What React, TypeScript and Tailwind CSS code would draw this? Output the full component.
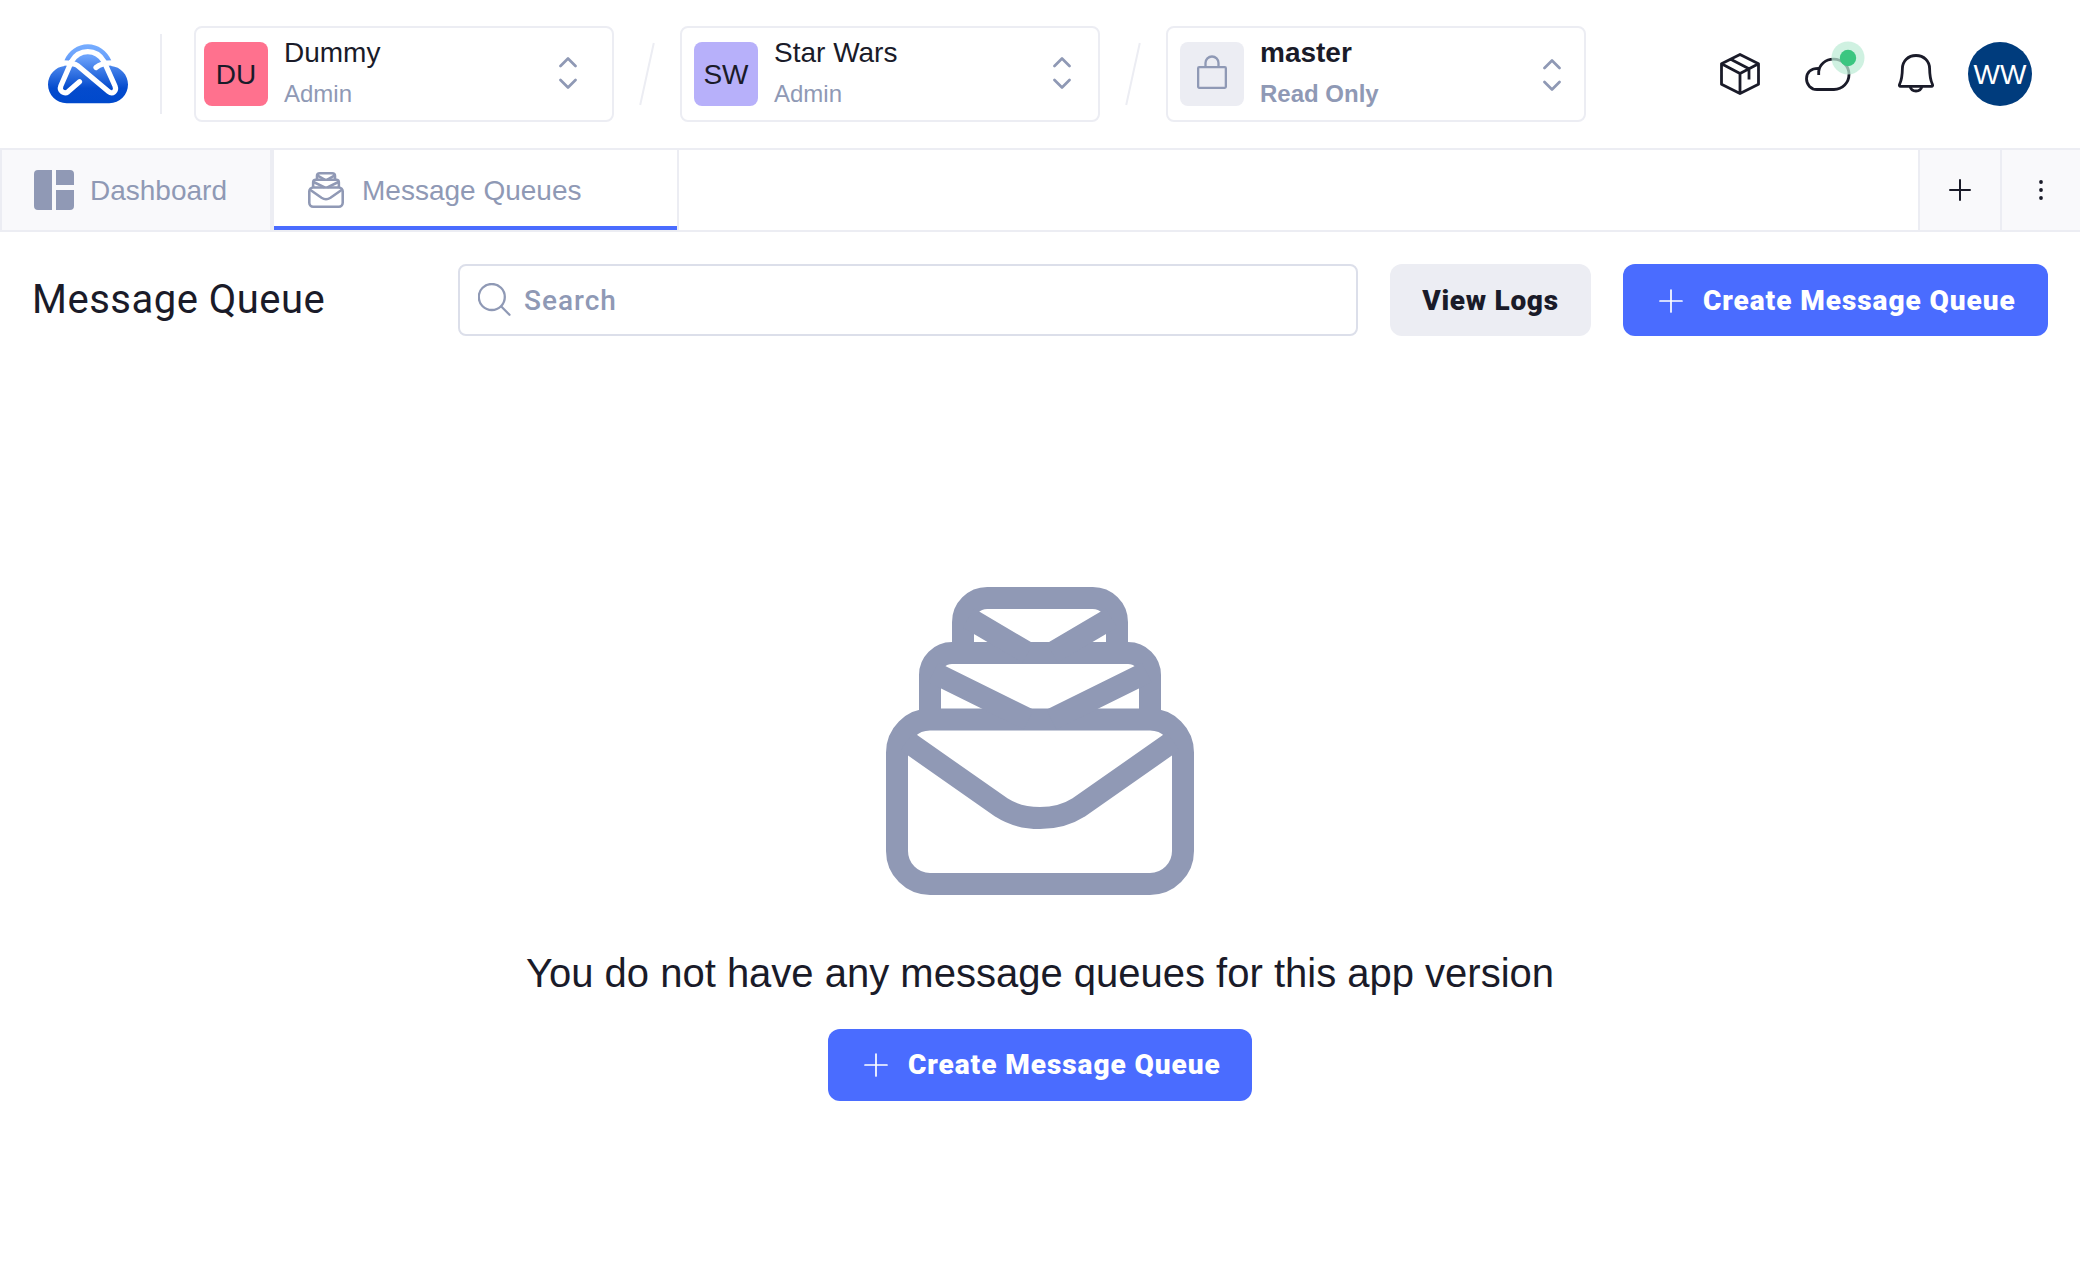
import type { ReactNode } from "react";

function Logo() {
  return (
    <svg className="h-[60px] w-20 shrink-0" viewBox="0 0 80 60" fill="none">
      <defs>
        <linearGradient id="cloud" x1="0" y1="0" x2="0" y2="59" gradientUnits="userSpaceOnUse">
          <stop offset="0" stopColor="#76adff" />
          <stop offset="0.22" stopColor="#6aa1fb" />
          <stop offset="0.45" stopColor="#3c7ae6" />
          <stop offset="0.75" stopColor="#044bcd" />
          <stop offset="1" stopColor="#0049cc" />
        </linearGradient>
      </defs>
      <path
        fill="url(#cloud)"
        d="M39.8.2C50 .2 59 6.5 63.2 16.3V22C72.5 22.8 80 30.8 80 40.6C80 51 71.7 59.3 61.3 59.3H18.7C8.3 59.3 0 51 0 40.6C0 30.8 7.5 22.8 16.5 22V16.3C20.6 6.5 29.6.2 39.8.2Z"
      />
      <g stroke="#fff" strokeWidth="5.2" strokeLinecap="round">
        <path d="M31.5 37.8L20 47.8C16.5 50.3 10.8 47.3 12.8 42L23.5 17.5C27.5 10.8 33 7.7 39.8 7.7C46.6 7.7 52 10.8 56 17.5L67 42C69 47.3 64.5 50.8 60.5 47.5L29.5 21.5C26 19 22 18.8 15 18.8" />
        <path d="M48 23.5C51.5 20.3 56 18.8 65 18.8" />
      </g>
    </svg>
  );
}

function UpDown() {
  return (
    <svg
      className="h-8 w-[18px] shrink-0"
      viewBox="0 0 18 32"
      fill="none"
      stroke="#8f99b5"
      strokeWidth="2.7"
      strokeLinecap="round"
      strokeLinejoin="round"
    >
      <path d="M1.5 9L9 1.5L16.5 9M1.5 23L9 30.5L16.5 23" />
    </svg>
  );
}

function Envelopes({ className }: { className: string }) {
  return (
    <svg className={className} viewBox="0 0 28 28" fill="none" stroke="#9099b5" strokeWidth="2">
      <rect x="1" y="12.05" width="26" height="14.95" rx="3" />
      <path d="M4 12V8a2 2 0 0 1 2-2H22a2 2 0 0 1 2 2V12" />
      <path d="M7 6V3.2A2.2 2.2 0 0 1 9.2 1H18.8A2.2 2.2 0 0 1 21 3.2V6" />
      <path d="M1.9 14.03L10.5 20.05C12.5 21.33 15.5 21.33 17.5 20.05L26.1 14.03" />
      <path d="M4.3 7.77L12.95 12.03M23.7 7.77L15.05 12.03" />
      <path d="M7.5 2.81L12.9 6M20.5 2.81L15.1 6" />
    </svg>
  );
}

function Slash() {
  return (
    <div className="flex w-[66px] shrink-0 justify-center">
      <svg className="h-16 w-4" viewBox="0 0 16 64" fill="none" stroke="#ecedf3" strokeWidth="2">
        <path d="M1.2 63L14.8 1" />
      </svg>
    </div>
  );
}

type PickerProps = {
  badge: ReactNode;
  tone: string;
  title: string;
  role: string;
  pad: string;
  arrows?: string;
  weight?: string;
};

function Picker({ badge, tone, title, role, pad, arrows = "pb-[3px]", weight = "font-normal" }: PickerProps) {
  return (
    <div className={`flex h-24 w-[420px] shrink-0 items-center rounded-lg border-2 border-[#ecedf3] ${pad}`}>
      <div className={`flex size-16 shrink-0 items-center justify-center rounded-lg text-[28px] ${tone}`}>{badge}</div>
      <div className={`ml-4 flex flex-1 flex-col gap-[11px] pb-[3px] whitespace-nowrap ${weight}`}>
        <div className="text-[28px] leading-8">{title}</div>
        <div className="text-[24px] leading-7 text-[#8f99b5]">{role}</div>
      </div>
      <div className={arrows}>
        <UpDown />
      </div>
    </div>
  );
}

function CreateButton({ className }: { className: string }) {
  return (
    <button
      className={`flex h-[72px] shrink-0 items-center rounded-xl bg-[#4a6cff] pl-9 font-[Roboto,sans-serif] text-[28px] font-black tracking-[0.94px] whitespace-nowrap text-white ${className}`}
    >
      <svg className="mr-5 size-6" viewBox="0 0 24 24" fill="none" stroke="currentColor" strokeWidth="1.7" strokeLinecap="round">
        <path d="M12 1V23M1 12H23" />
      </svg>
      Create Message Queue
    </button>
  );
}

export default function App() {
  return (
    <div className="flex h-[1288px] w-[2080px] flex-col overflow-hidden bg-white font-['Liberation_Sans',Arial,sans-serif] text-[#1a1b29]">
      <header className="flex h-[150px] shrink-0 items-center border-b-2 border-[#ecedf3] pl-12">
        <Logo />
        <div className="mx-8 h-20 w-0.5 shrink-0 bg-[#ecedf3]" />
        <Picker pad="pl-2 pr-[35px]" tone="bg-[#ff718e]" badge={<span className="pt-px">DU</span>} title="Dummy" role="Admin" />
        <Slash />
        <Picker pad="pl-3 pr-[27px]" tone="bg-[#b7b0fa]" badge={<span className="pt-px">SW</span>} title="Star Wars" role="Admin" />
        <Slash />
        <Picker
          pad="pl-3 pr-[23px]"
          tone="bg-[#ecedf3]"
          arrows="pt-px"
          weight="font-bold"
          badge={
            <svg className="mb-1 h-[34px] w-[30px]" viewBox="0 0 30 34" fill="none" stroke="#8f99b5" strokeWidth="2.3">
              <rect x="1.15" y="12.15" width="27.7" height="20.7" rx="1" />
              <path d="M8.5 12V8a6.5 6.5 0 0 1 13 0V12" />
            </svg>
          }
          title="master"
          role="Read Only"
        />
        <div className="ml-[134px] flex items-center">
          <svg className="h-[42px] w-10" viewBox="0 0 40 42" fill="none" stroke="#1a1b29" strokeWidth="2.8" strokeLinejoin="round">
            <path d="M20 1.5L38.5 10.7V31.3L20 40.5L1.5 31.3V10.7ZM1.5 10.7L20 20.5L38.5 10.7M20 20.5V40.5M10.7 6.2L29 15.8V26.5" />
          </svg>
          <svg className="ml-11 h-[68px] w-16" viewBox="0 0 64 68" fill="none">
            <path
              stroke="#1a1b29"
              strokeWidth="2.8"
              strokeLinejoin="round"
              d="M14.700 35V31.500C15.500 24.500 21.500 19.200 29.500 19.200C38.500 19.200 45 26 45 34.300C45 42.800 38.500 49.500 30 49.500H13C7 49.500 2.500 44.800 2.500 38.800C2.500 32.500 7 28 15 28.300"
            />
            <circle cx="44" cy="17.9" r="16.5" fill="#bdebd5" fillOpacity="0.72" />
            <circle cx="44" cy="18" r="8.2" fill="#3ac680" />
          </svg>
          <svg className="ml-[30px] h-[42px] w-9" viewBox="0 0 36 42" fill="none" stroke="#1a1b29" strokeWidth="2.8" strokeLinejoin="round">
            <path d="M18 2.5C10 2.5 4.5 8.2 4.4 15.5C4.3 22 3.6 27 1.7 31C1.1 32.4 1.3 33.3 2.7 33.3H33.3C34.7 33.3 34.9 32.4 34.3 31C32.4 27 31.7 22 31.6 15.5C31.5 8.2 26 2.5 18 2.5ZM12 33.5a6.2 6 0 0 0 12 0" />
          </svg>
          <div className="ml-[34px] flex size-16 items-center justify-center rounded-full bg-[#003c7d] pt-px text-[28px] text-white">
            WW
          </div>
        </div>
      </header>

      <nav className="flex h-[82px] shrink-0 border-b-2 border-[#ecedf3] text-[28px] text-[#8f99b5]">
        <div className="flex w-[274px] items-center border-r-4 border-l-2 border-[#ecedf3] bg-[#f9f9fb] pl-8">
          <svg className="mr-4 size-10" viewBox="0 0 40 40" fill="#9099b5">
            <path d="M4 0H18V40H4a4 4 0 0 1-4-4V4a4 4 0 0 1 4-4ZM22 0H36a4 4 0 0 1 4 4V15H22ZM22 20H40V36a4 4 0 0 1-4 4H22Z" />
          </svg>
          <span className="pt-0.5">Dashboard</span>
        </div>
        <div className="flex w-[405px] border-r-2 border-[#ecedf3]">
          <div className="flex flex-1 items-center border-b-4 border-[#4a6cff] pt-1 pl-[34px]">
            <Envelopes className="mr-[18px] size-9" />
            <span className="pt-0.5">Message Queues</span>
          </div>
        </div>
        <div className="ml-auto flex text-[#1a1b29]">
          <div className="flex w-[82px] items-center justify-center border-l-2 border-[#ecedf3] bg-[#f9f9fb]">
            <svg className="size-[22px]" viewBox="0 0 22 22" fill="none" stroke="currentColor" strokeWidth="2" strokeLinecap="round">
              <path d="M11 1V21M1 11H21" />
            </svg>
          </div>
          <div className="flex w-20 items-center justify-center border-l-2 border-[#ecedf3] bg-[#f9f9fb]">
            <svg className="h-5 w-1" viewBox="0 0 4 20" fill="currentColor">
              <circle cx="2" cy="2" r="1.9" />
              <circle cx="2" cy="10" r="1.9" />
              <circle cx="2" cy="18" r="1.9" />
            </svg>
          </div>
        </div>
      </nav>

      <section className="flex shrink-0 items-center px-8 pt-8 font-[Roboto,sans-serif]">
        <h1 className="w-[426px] text-[40px] leading-[48px] font-[450] tracking-[0.5px] whitespace-nowrap">Message Queue</h1>
        <div className="flex h-[72px] w-[900px] items-center rounded-lg border-2 border-[#dcdfea] pl-[18px] text-[28px] font-[480] tracking-[1px] text-[#8f99b5]">
          <svg className="mr-3 size-[34px]" viewBox="0 0 34 34" fill="none" stroke="#8f99b5" strokeWidth="2.3" strokeLinecap="round">
            <circle cx="13.8" cy="14" r="13" />
            <path d="M23.3 23.5L31.5 31.8" />
          </svg>
          <span className="pt-0.5">Search</span>
        </div>
        <button className="mx-8 flex h-[72px] w-[201px] items-center justify-center rounded-xl bg-[#ecedf3] pt-px text-[28px] font-black tracking-[0.7px] whitespace-nowrap">
          View Logs
        </button>
        <CreateButton className="w-[425px] pt-px" />
      </section>

      <main className="flex flex-col items-center pt-[251px]">
        <Envelopes className="size-[308px]" />
        <p className="mt-[54px] mb-8 text-[40px] leading-[48px] whitespace-nowrap">You do not have any message queues for this app version</p>
        <CreateButton className="w-[424px]" />
      </main>
    </div>
  );
}
